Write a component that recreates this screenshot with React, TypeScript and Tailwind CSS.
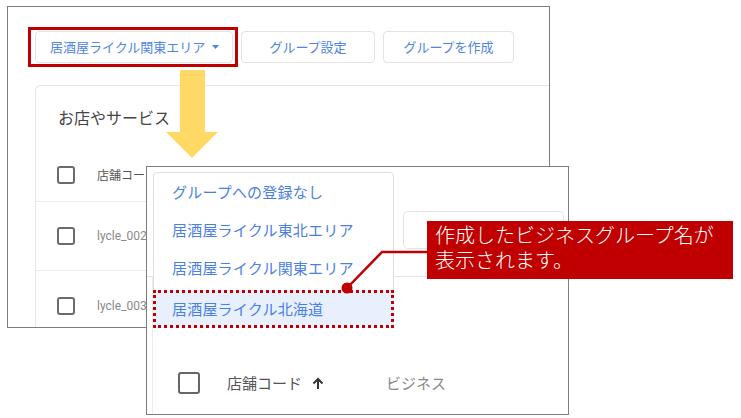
export default function App() {
  return (
    <div className="relative w-[741px] h-[418px] overflow-hidden bg-white font-['Noto_Sans_CJK_JP','Noto_Sans',sans-serif]">
      {/* Back screenshot */}
      <div className="absolute left-[7px] top-[6px] w-[543px] h-[322px] border border-[#7d7d7d] bg-white overflow-hidden flex flex-col pt-[24px] pl-[27px]">
        <div className="flex gap-2 h-[32px] shrink-0">
          <div className="w-[198px] h-[32px] border border-[#e3e3e3] rounded-[4px] flex items-center justify-between pl-[14px] pr-[13px] text-[13px] text-[#4d84e6] whitespace-nowrap">
            <span>居酒屋ライクル関東エリア</span>
            <svg width="7" height="4" viewBox="0 0 7 4"><path d="M0 0 L7 0 L3.5 4 Z" fill="#4d84e6" /></svg>
          </div>
          <div className="w-[134px] h-[32px] border border-[#e3e3e3] rounded-[4px] flex items-center justify-center text-[13px] text-[#4d84e6] whitespace-nowrap">
            グループ設定
          </div>
          <div className="w-[131px] h-[32px] border border-[#e3e3e3] rounded-[4px] flex items-center justify-center text-[13px] text-[#4d84e6] whitespace-nowrap">
            グループを作成
          </div>
        </div>
        <div className="mt-[22px] flex-1 border-l border-t border-[#e6e6e6] rounded-tl-[6px] flex flex-col">
          <div className="h-[62px] shrink-0 pt-[19px] pl-[22px] text-[16px] leading-[24px] text-[#444]">お店やサービス</div>
          <div className="h-[54px] shrink-0 border-b border-[#ebebeb] flex items-center pl-[21px] gap-[22px]">
            <div className="w-[18px] h-[18px] border-2 border-[#6b6b6b] rounded-[3px]" />
            <span className="text-[12px] text-[#555] whitespace-nowrap">店舗コード</span>
          </div>
          <div className="h-[69px] shrink-0 border-b border-[#ebebeb] flex items-center pl-[21px] gap-[22px]">
            <div className="w-[18px] h-[18px] border-2 border-[#6b6b6b] rounded-[3px]" />
            <span className="text-[12px] text-[#888] font-['Roboto','Liberation_Sans',sans-serif] whitespace-nowrap">lycle_0021</span>
          </div>
          <div className="h-[69px] shrink-0 flex items-center pl-[21px] gap-[22px]">
            <div className="w-[18px] h-[18px] border-2 border-[#6b6b6b] rounded-[3px]" />
            <span className="text-[12px] text-[#888] font-['Roboto','Liberation_Sans',sans-serif] whitespace-nowrap">lycle_0031</span>
          </div>
        </div>
      </div>

      {/* Red highlight frame */}
      <div className="absolute left-[28px] top-[27px] w-[210px] h-[40px] border-[3px] border-[#c00000]" />

      {/* Yellow arrow */}
      <svg className="absolute left-0 top-0 pointer-events-none" width="741" height="418" viewBox="0 0 741 418">
        <polygon points="180,70 205,70 205,132 218,132 192,158 166,132 180,132" fill="#ffd966" />
      </svg>

      {/* Front screenshot */}
      <div className="absolute left-[146px] top-[166px] w-[423px] h-[249px] border border-[#7d7d7d] bg-white overflow-hidden flex flex-col">
        <div className="h-[110px] shrink-0 border-b border-[#e6e6e6] flex justify-end pt-[44px] pr-[4px]">
          <div className="w-[161px] h-[38px] border border-[#e3e3e3] rounded-[5px]" />
        </div>
        <div className="flex-1 ml-[5px] border-l border-[#ececec] pt-[95px] pl-[25px]">
          <div className="flex items-center h-[22px]">
            <div className="w-[22px] h-[22px] border-[2.5px] border-[#666] rounded-[3px]" />
            <span className="ml-[27px] text-[15px] text-[#555] whitespace-nowrap">店舗コード</span>
            <svg className="ml-[10px]" width="12" height="13" viewBox="0 0 12 13">
              <path d="M6 12 V2 M1.5 6.5 L6 2 L10.5 6.5" stroke="#333" strokeWidth="2" fill="none" />
            </svg>
            <span className="ml-[62px] text-[15px] text-[#8a8a8a] whitespace-nowrap">ビジネス</span>
          </div>
        </div>

        {/* Dropdown menu */}
        <div className="absolute left-[6px] top-[5px] w-[241px] border border-[#dedede] rounded-[4px] bg-white text-[15px] text-[#4a80e3] tracking-[0.2px]">
          <div className="h-[38px] flex items-center pl-[18px] whitespace-nowrap">グループへの登録なし</div>
          <div className="h-[38px] flex items-center pl-[18px] whitespace-nowrap">居酒屋ライクル東北エリア</div>
          <div className="h-[38px] flex items-center pl-[18px] whitespace-nowrap">居酒屋ライクル関東エリア</div>
          <div className="mt-[3px] -mx-px -mb-px h-[38px] flex items-center pl-[16px] whitespace-nowrap bg-[#e8f0fe] border-[3px] border-dotted border-[#c00000]">
            居酒屋ライクル北海道
          </div>
        </div>
      </div>

      {/* Callout line */}
      <svg className="absolute left-0 top-0 pointer-events-none" width="741" height="418" viewBox="0 0 741 418">
        <polyline points="347,288 382,252 428,252" stroke="#c00000" strokeWidth="2.5" fill="none" />
        <circle cx="347" cy="288" r="5.5" fill="#c00000" />
      </svg>

      {/* Callout box */}
      <div className="absolute left-[427px] top-[221px] w-[306px] h-[58px] bg-[#c00000] text-white text-[20px] leading-[25px] font-light pl-[8px] pt-[1px] whitespace-nowrap">
        <div>作成したビジネスグループ名が</div>
        <div>表示されます。</div>
      </div>
    </div>
  );
}
